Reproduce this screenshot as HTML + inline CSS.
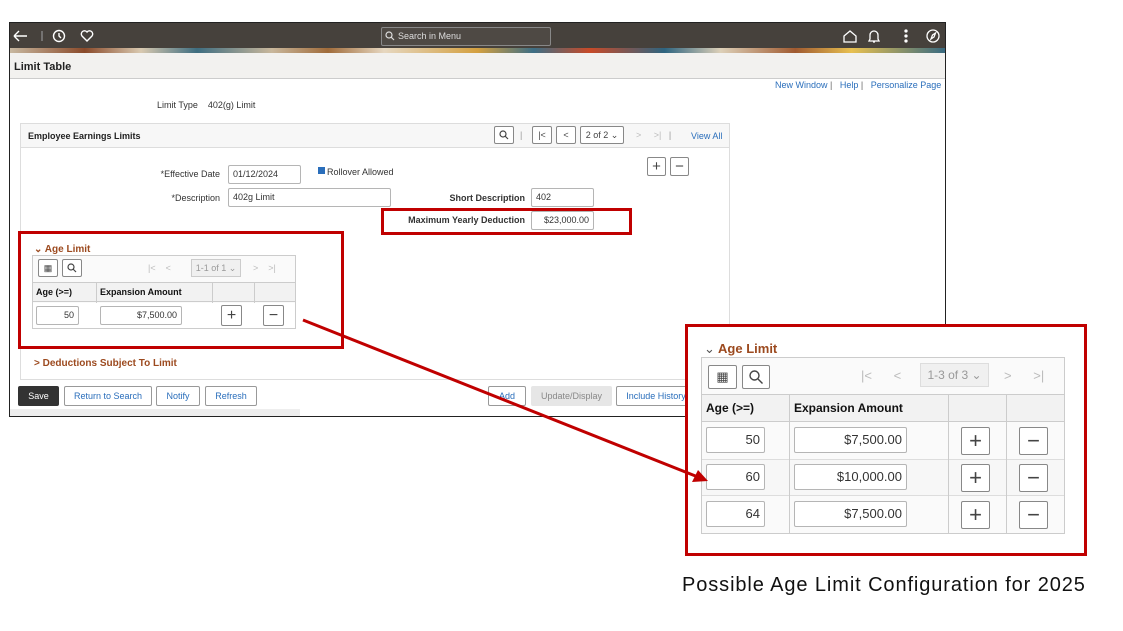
<!DOCTYPE html>
<html><head><meta charset="utf-8"><style>
*{box-sizing:border-box;margin:0;padding:0}
body{width:1123px;height:631px;background:#fff;position:relative;overflow:hidden;font-family:"Liberation Sans",Arial,sans-serif;font-size:9px;color:#333}
.a{position:absolute}
.inp{position:absolute;border:1px solid #b5b5b5;border-radius:2px;background:#fff;font-size:9px;padding:0 4px;line-height:17px}
.btn{position:absolute;border:1px solid #999;border-radius:2px;background:#fff;color:#2a6ebb;font-size:9px;text-align:center;line-height:18px}
.lbl{position:absolute;font-size:9px;color:#333;text-align:right}
.b{font-weight:bold}
.sq{position:absolute;border:1px solid #888;border-radius:2px;background:#fff;text-align:center;color:#444}
.sq svg{position:absolute;left:50%;top:50%;transform:translate(-50%,-50%)}
.red{position:absolute;border:3px solid #c00000}
</style></head><body>
<div class="a" style="left:9px;top:22px;width:937px;height:395px;border:1px solid #222;background:#fff"></div>
<div class="a" style="left:10px;top:23px;width:935px;height:25px;background:#46413c"></div>
<div class="a" style="left:10px;top:48px;width:935px;height:5px;background:linear-gradient(90deg,#c8b8a0 0%,#8a4a2a 8%,#d9c9b0 14%,#3e6d80 20%,#c9b79c 28%,#a06b3a 34%,#e6d7c0 40%,#d4a040 50%,#3d6e85 56%,#c84a28 62%,#2e6480 70%,#ddd0b8 76%,#a05a30 84%,#e8c050 90%,#396a80 100%)"></div>
<div class="a" style="left:10px;top:53px;width:935px;height:26px;background:#f2f1ef;border-bottom:1px solid #ccc"></div>
<div class="a b" style="left:14px;top:61px;font-size:11px;color:#222">Limit Table</div>
<svg class="a" style="left:12px;top:28px" width="90" height="16" fill="none" stroke="#fff" stroke-width="1.4"><path d="M2 8h13M2 8l5-5M2 8l5 5"/><path d="M30 3v10" stroke="#888"/><circle cx="47" cy="8" r="5.5"/><path d="M47 5v3l2 2"/><path d="M75 13l-5-5a3 3 0 0 1 5-4a3 3 0 0 1 5 4z"/></svg>
<div class="a" style="left:381px;top:27px;width:170px;height:19px;border:1px solid #888;border-radius:2px;background:#4e4944;color:#ddd;font-size:9px;line-height:17px;padding-left:16px">Search in Menu</div>
<svg class="a" style="left:385px;top:31px" width="10" height="10" fill="none" stroke="#ddd" stroke-width="1.2"><circle cx="4" cy="4" r="3"/><path d="M6 6l3 3"/></svg>
<svg class="a" style="left:842px;top:28px" width="100" height="16" fill="none" stroke="#fff" stroke-width="1.3"><path d="M2 8l6-5 6 5v6H2z"/><path d="M32 3a4 4 0 0 1 4 4v4l1 2H27l1-2V7a4 4 0 0 1 4-4zM31 14h2"/><circle cx="64" cy="3" r="1" fill="#fff"/><circle cx="64" cy="8" r="1" fill="#fff"/><circle cx="64" cy="13" r="1" fill="#fff"/><circle cx="91" cy="8" r="6"/><path d="M89 11l1.5-4 3-2-1.5 4z"/></svg>
<div class="a" style="left:775px;top:80px;color:#2a6ebb;font-size:9px">New Window <span style="color:#666">|</span>&nbsp;&nbsp; Help <span style="color:#666">|</span>&nbsp;&nbsp; Personalize Page</div>
<div class="a" style="left:157px;top:100px">Limit Type &nbsp;&nbsp;&nbsp;402(g) Limit</div>
<div class="a" style="left:20px;top:123px;width:710px;height:257px;border:1px solid #ddd;background:#fff"></div>
<div class="a" style="left:21px;top:124px;width:708px;height:24px;background:#f7f7f7;border-bottom:1px solid #ddd"></div>
<div class="a b" style="left:28px;top:131px;color:#222">Employee Earnings Limits</div>
<div class="sq" style="left:494px;top:126px;width:20px;height:18px"><svg width="10" height="10" fill="none" stroke="#444" stroke-width="1.2"><circle cx="4" cy="4" r="3"/><path d="M6 6l3 3"/></svg></div>
<div class="a" style="left:520px;top:130px;color:#999">|</div>
<div class="sq" style="left:532px;top:126px;width:20px;height:18px;line-height:16px">|&lt;</div>
<div class="sq" style="left:556px;top:126px;width:20px;height:18px;line-height:16px">&lt;</div>
<div class="sq" style="left:580px;top:126px;width:44px;height:18px;line-height:16px;font-size:9px">2 of 2 &#8964;</div>
<div class="a" style="left:636px;top:130px;color:#bbb">&gt; &nbsp;&nbsp;&nbsp;&nbsp;&gt;| &nbsp;&nbsp;<span style="color:#999">|</span></div>
<div class="a" style="left:691px;top:131px;color:#2a6ebb">View All</div>
<div class="sq" style="left:647px;top:157px;width:19px;height:19px;line-height:17px;font-size:15px">+</div>
<div class="sq" style="left:670px;top:157px;width:19px;height:19px;line-height:17px;font-size:15px">−</div>
<div class="lbl" style="left:130px;top:169px;width:90px">*Effective Date</div>
<div class="inp" style="left:228px;top:165px;width:73px;height:19px">01/12/2024</div>
<div class="a" style="left:318px;top:167px;width:7px;height:7px;background:#2a6ebb"></div>
<div class="a" style="left:327px;top:167px">Rollover Allowed</div>
<div class="lbl" style="left:130px;top:193px;width:90px">*Description</div>
<div class="inp" style="left:228px;top:188px;width:163px;height:19px">402g Limit</div>
<div class="lbl b" style="left:420px;top:193px;width:105px">Short Description</div>
<div class="inp" style="left:531px;top:188px;width:63px;height:19px">402</div>
<div class="lbl b" style="left:380px;top:215px;width:145px">Maximum Yearly Deduction</div>
<div class="inp" style="left:531px;top:211px;width:63px;height:19px;text-align:right">$23,000.00</div>
<div class="red" style="left:381px;top:208px;width:251px;height:27px"></div>
<div class="a" style="left:34px;top:244px;color:#9c4a1f;font-size:10px;font-weight:bold">&#8964; Age Limit</div>
<div class="a" style="left:32px;top:255px;width:264px;height:74px;border:1px solid #ccc;background:#fafafa"></div>
<div class="sq" style="left:38px;top:259px;width:20px;height:18px;line-height:16px">&#9638;</div>
<div class="sq" style="left:62px;top:259px;width:20px;height:18px"><svg width="10" height="10" fill="none" stroke="#444" stroke-width="1.2"><circle cx="4" cy="4" r="3"/><path d="M6 6l3 3"/></svg></div>
<div class="a" style="left:148px;top:263px;color:#bbb">|&lt; &nbsp;&nbsp;&nbsp;&lt;</div>
<div class="a" style="left:191px;top:259px;width:50px;height:18px;border:1px solid #ccc;background:#f0f0f0;color:#999;line-height:16px;text-align:center">1-1 of 1 &#8964;</div>
<div class="a" style="left:253px;top:263px;color:#bbb">&gt; &nbsp;&nbsp;&nbsp;&gt;|</div>
<div class="a" style="left:33px;top:282px;width:262px;height:20px;background:#f2f2f2;border-top:1px solid #ccc;border-bottom:1px solid #ccc"></div>
<div class="a" style="left:96px;top:282px;width:1px;height:46px;background:#ccc"></div>
<div class="a" style="left:212px;top:282px;width:1px;height:46px;background:#ccc"></div>
<div class="a" style="left:254px;top:282px;width:1px;height:46px;background:#ccc"></div>
<div class="a b" style="left:36px;top:287px;color:#111">Age (&gt;=)</div>
<div class="a b" style="left:100px;top:287px;color:#111">Expansion Amount</div>
<div class="a" style="left:33px;top:303px;width:262px;height:25px;background:#fff"></div>
<div class="inp" style="left:36px;top:306px;width:43px;height:19px;text-align:right">50</div>
<div class="inp" style="left:100px;top:306px;width:82px;height:19px;text-align:right">$7,500.00</div>
<div class="sq" style="left:221px;top:305px;width:21px;height:21px;line-height:19px;font-size:16px">+</div>
<div class="sq" style="left:263px;top:305px;width:21px;height:21px;line-height:19px;font-size:16px">−</div>
<div class="red" style="left:18px;top:231px;width:326px;height:118px"></div>
<div class="a" style="left:34px;top:358px;color:#9c4a1f;font-size:10px;font-weight:bold">&gt; Deductions Subject To Limit</div>
<div class="a" style="left:18px;top:386px;width:41px;height:20px;background:#333;border-radius:2px;color:#fff;text-align:center;line-height:20px;font-size:9px">Save</div>
<div class="btn" style="left:64px;top:386px;width:88px;height:20px">Return to Search</div>
<div class="btn" style="left:156px;top:386px;width:44px;height:20px">Notify</div>
<div class="btn" style="left:205px;top:386px;width:52px;height:20px">Refresh</div>
<div class="btn" style="left:488px;top:386px;width:38px;height:20px">Add</div>
<div class="a" style="left:531px;top:386px;width:81px;height:20px;background:#e6e6e6;border-radius:2px;color:#888;text-align:center;line-height:20px">Update/Display</div>
<div class="btn" style="left:616px;top:386px;width:80px;height:20px">Include History</div>
<div class="a" style="left:10px;top:409px;width:290px;height:7px;background:#eee"></div>
<div class="a" style="left:687px;top:326px;width:398px;height:228px;background:#fff"></div>
<div class="a" style="left:704px;top:341px;color:#9c4a1f;font-size:13px;font-weight:bold"><span style="color:#555;font-weight:normal">&#8964;</span> Age Limit</div>
<div class="a" style="left:701px;top:357px;width:364px;height:177px;border:1px solid #ccc;background:#fafafa"></div>
<div class="sq" style="left:708px;top:365px;width:29px;height:24px;line-height:22px;font-size:13px">&#9638;</div>
<div class="sq" style="left:742px;top:365px;width:28px;height:24px"><svg width="15" height="15" fill="none" stroke="#444" stroke-width="1.4"><circle cx="6" cy="6" r="4.5"/><path d="M9.5 9.5l4.5 4.5"/></svg></div>
<div class="a" style="left:861px;top:368px;color:#bbb;font-size:13px">|&lt; &nbsp;&nbsp;&nbsp;&nbsp;&nbsp;&lt;</div>
<div class="a" style="left:920px;top:363px;width:69px;height:24px;border:1px solid #ddd;background:#f0f0f0;color:#999;text-align:center;line-height:22px;font-size:12px">1-3 of 3 &#8964;</div>
<div class="a" style="left:1004px;top:368px;color:#bbb;font-size:13px">&gt; &nbsp;&nbsp;&nbsp;&nbsp;&nbsp;&gt;|</div>
<div class="a" style="left:702px;top:394px;width:362px;height:28px;background:#f2f2f2;border-top:1px solid #ccc;border-bottom:1px solid #ccc"></div>
<div class="a" style="left:702px;top:459px;width:362px;height:37px;border-top:1px solid #ddd;border-bottom:1px solid #ddd;background:#f7f7f7"></div>
<div class="a" style="left:789px;top:394px;width:1px;height:139px;background:#ccc"></div>
<div class="a" style="left:948px;top:394px;width:1px;height:139px;background:#ccc"></div>
<div class="a" style="left:1006px;top:394px;width:1px;height:139px;background:#ccc"></div>
<div class="a b" style="left:706px;top:401px;color:#111;font-size:12px">Age (&gt;=)</div>
<div class="a b" style="left:794px;top:401px;color:#111;font-size:12px">Expansion Amount</div>
<div class="inp" style="left:706px;top:427px;width:59px;height:26px;line-height:24px;font-size:13px;text-align:right">50</div>
<div class="inp" style="left:794px;top:427px;width:113px;height:26px;line-height:24px;font-size:13px;text-align:right">$7,500.00</div>
<div class="sq" style="left:961px;top:427px;width:29px;height:28px;line-height:25px;font-size:22px">+</div>
<div class="sq" style="left:1019px;top:427px;width:29px;height:28px;line-height:25px;font-size:22px">−</div>
<div class="inp" style="left:706px;top:464px;width:59px;height:26px;line-height:24px;font-size:13px;text-align:right">60</div>
<div class="inp" style="left:794px;top:464px;width:113px;height:26px;line-height:24px;font-size:13px;text-align:right">$10,000.00</div>
<div class="sq" style="left:961px;top:464px;width:29px;height:28px;line-height:25px;font-size:22px">+</div>
<div class="sq" style="left:1019px;top:464px;width:29px;height:28px;line-height:25px;font-size:22px">−</div>
<div class="inp" style="left:706px;top:501px;width:59px;height:26px;line-height:24px;font-size:13px;text-align:right">64</div>
<div class="inp" style="left:794px;top:501px;width:113px;height:26px;line-height:24px;font-size:13px;text-align:right">$7,500.00</div>
<div class="sq" style="left:961px;top:501px;width:29px;height:28px;line-height:25px;font-size:22px">+</div>
<div class="sq" style="left:1019px;top:501px;width:29px;height:28px;line-height:25px;font-size:22px">−</div>
<div class="red" style="left:685px;top:324px;width:402px;height:232px"></div>
<svg class="a" style="left:0;top:0" width="1123" height="631"><path d="M303 320L698 477" stroke="#c00000" stroke-width="3"/><path d="M708 481L692 482L698 470z" fill="#c00000"/></svg>
<div class="a" style="left:682px;top:574px;font-size:20px;letter-spacing:0.9px;color:#111;white-space:nowrap">Possible Age Limit Configuration for 2025</div>
</body></html>
